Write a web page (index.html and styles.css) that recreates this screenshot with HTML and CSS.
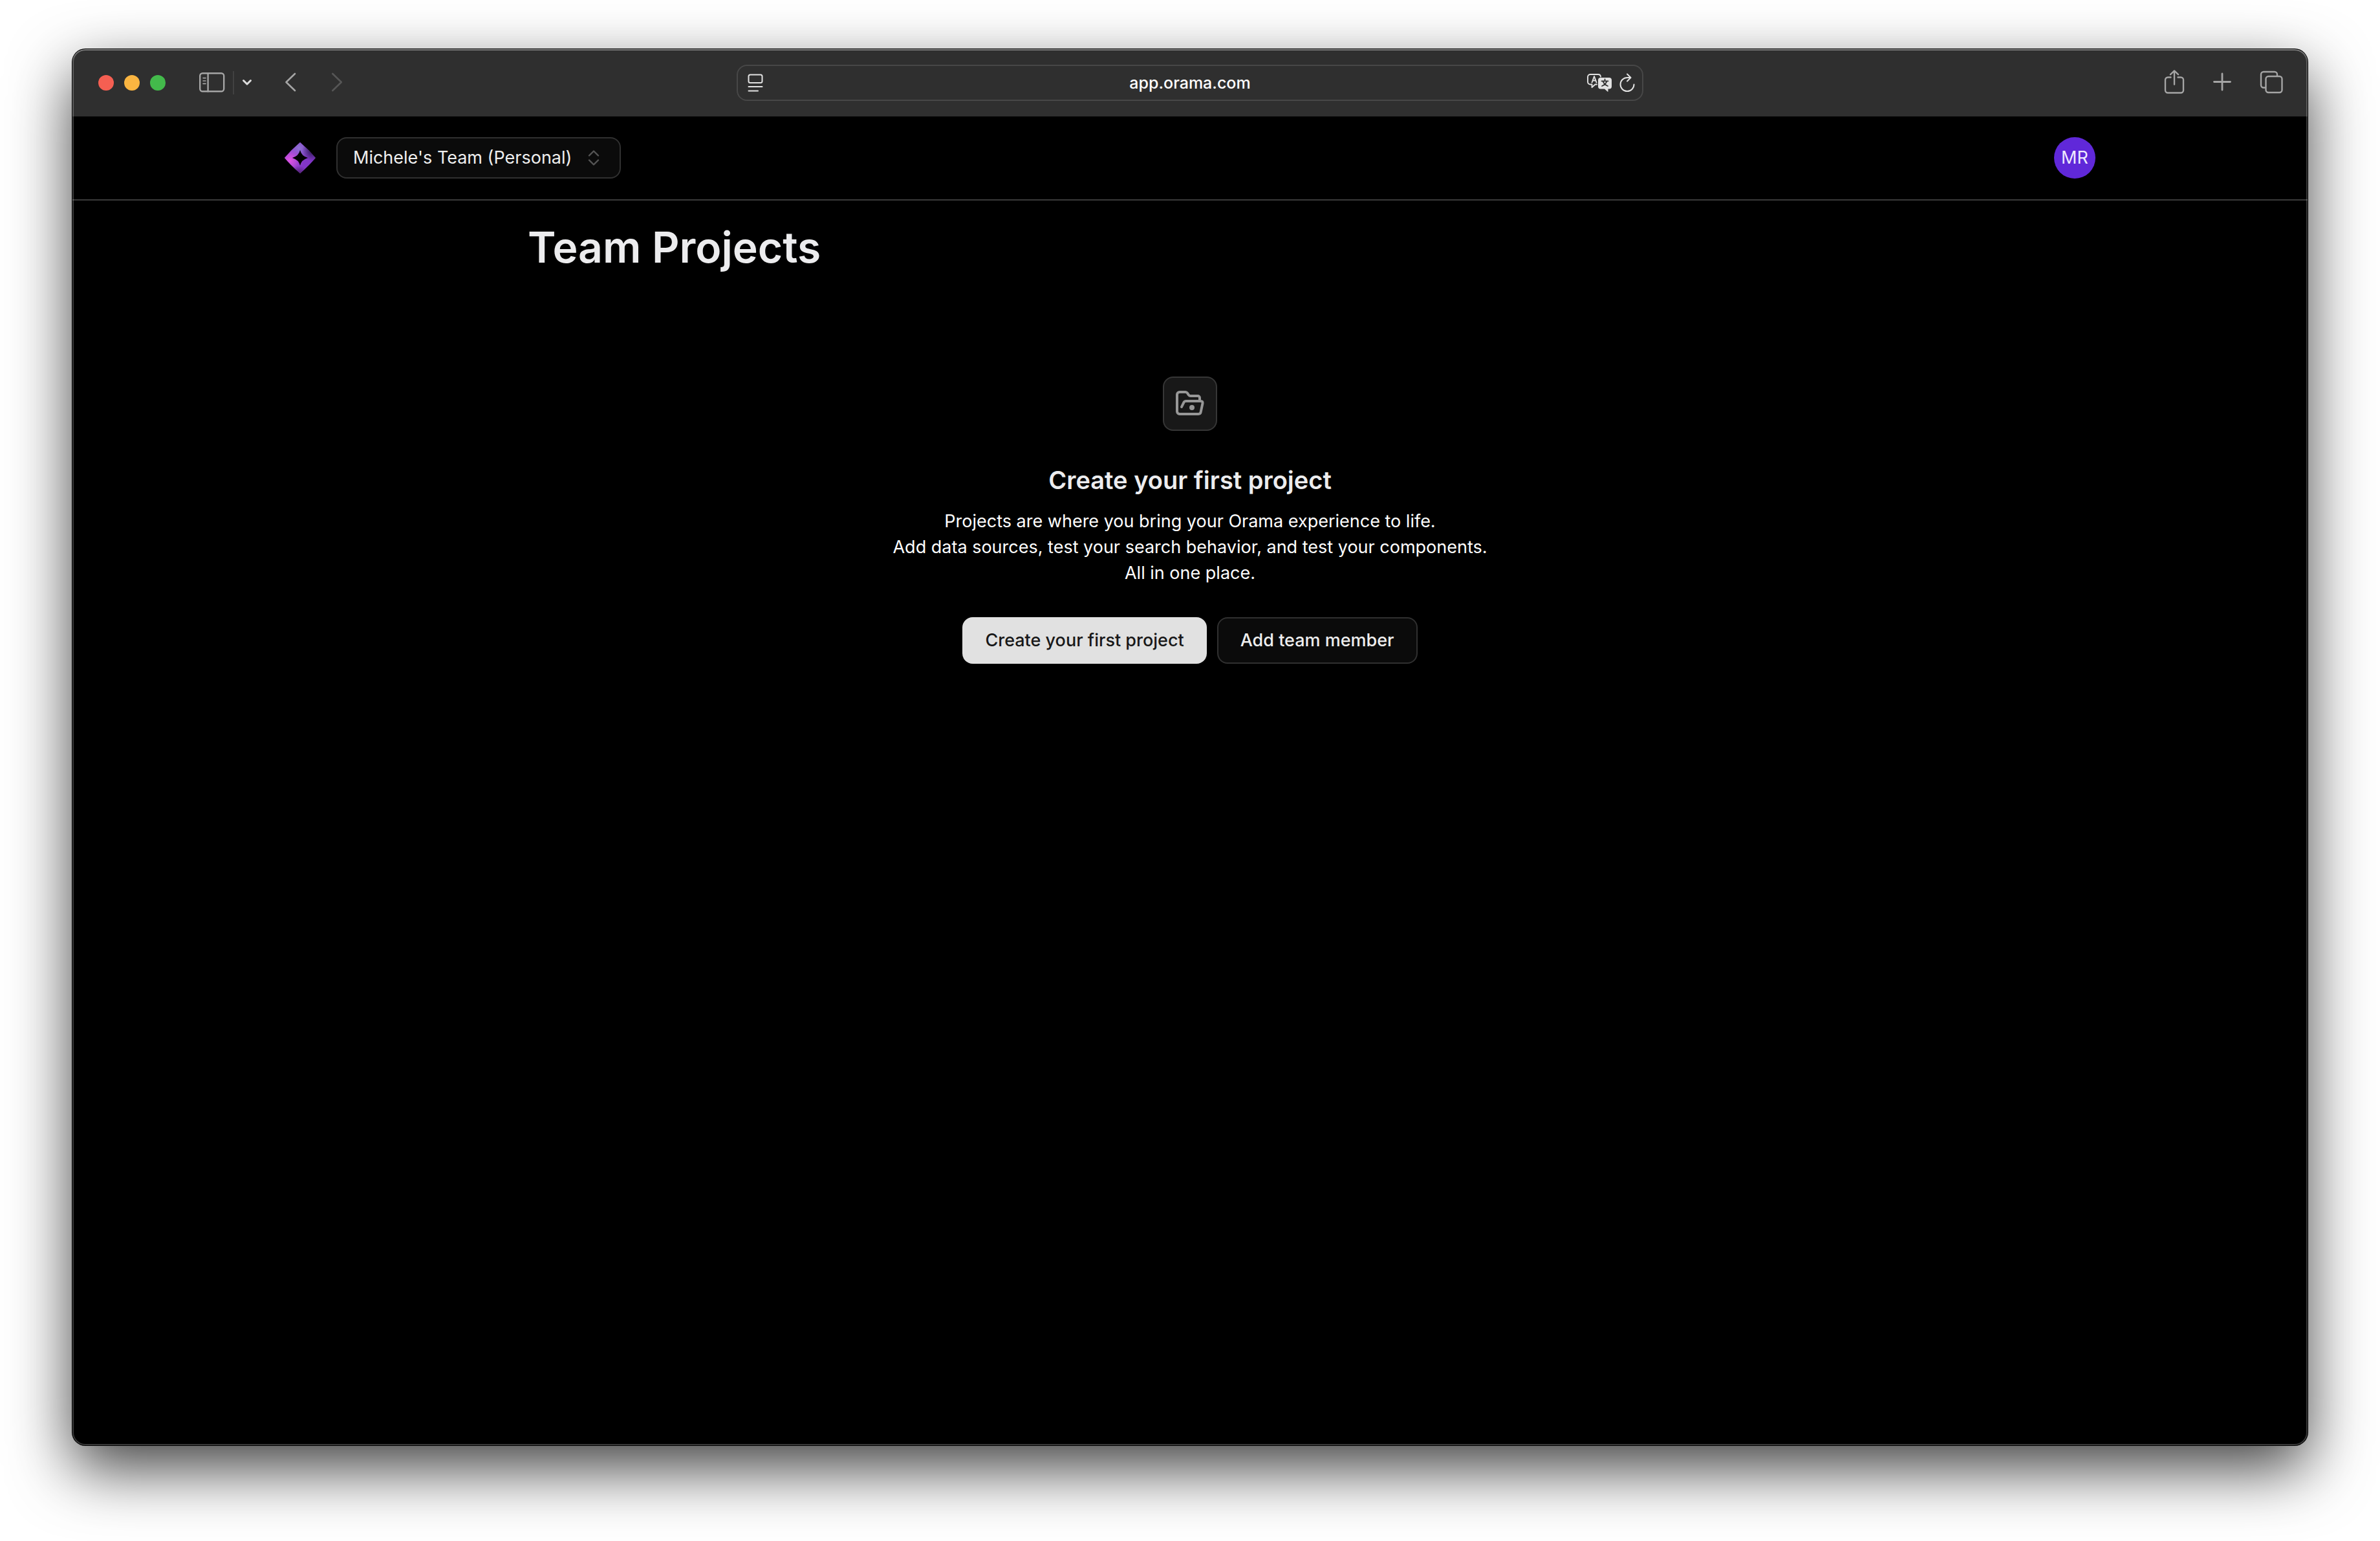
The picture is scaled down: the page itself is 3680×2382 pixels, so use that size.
FILE: index.html
```html
<!DOCTYPE html>
<html lang="en">
<head>
<meta charset="utf-8">
<title>Team Projects</title>
<link rel="stylesheet" href="styles.css">
</head>
<body>
<div class="window">
  <div class="toolbar">
    <div class="toolbar-side">
      <div class="lights">
        <span class="light light-close"></span>
        <span class="light light-minimize"></span>
        <span class="light light-zoom"></span>
      </div>
      <div class="sidebar-tools">
        <button class="tool" type="button" aria-label="Sidebar">
          <svg width="40" height="36" viewBox="0 0 40 36" fill="none" stroke="currentColor" stroke-width="2.4" stroke-linecap="round"><rect x="1.2" y="3.2" width="37" height="28" rx="4"/><path d="M13.6 3.2v28"/><path stroke-width="1.6" d="M6 10.6h4M6 15h4M6 19.4h4"/></svg>
        </button>
        <span class="tool-divider"></span>
        <button class="tool tool-bright" type="button" aria-label="Tab groups">
          <svg width="16" height="36" viewBox="0 0 16 36" fill="none" stroke="currentColor" stroke-width="3" stroke-linecap="round" stroke-linejoin="round"><path d="M2.5 14.5l5.5 5.5 5.5-5.5"/></svg>
        </button>
      </div>
      <div class="history">
        <button class="tool" type="button" aria-label="Back">
          <svg width="20" height="36" viewBox="0 0 20 36" fill="none" stroke="currentColor" stroke-width="2.6" stroke-linecap="round" stroke-linejoin="round"><path d="M16 4L2.5 17 16 30"/></svg>
        </button>
        <button class="tool tool-dim" type="button" aria-label="Forward">
          <svg width="20" height="36" viewBox="0 0 20 36" fill="none" stroke="currentColor" stroke-width="2.6" stroke-linecap="round" stroke-linejoin="round"><path d="M2.3 4L15.8 17 2.3 30"/></svg>
        </button>
      </div>
    </div>
    <div class="address">
      <button class="address-tool" type="button" aria-label="Reader">
        <svg width="24" height="28" viewBox="0 0 24 28" fill="none" stroke="currentColor" stroke-width="2" stroke-linecap="round"><rect x="1.5" y="1.5" width="21" height="12.6" rx="2.5"/><path d="M1.5 20h21M1.5 26.4h14.5"/></svg>
      </button>
      <input class="address-text" type="text" value="app.orama.com" aria-label="Address">
      <div class="address-end">
        <button class="address-tool" type="button" aria-label="Translate">
          <svg width="40" height="30" viewBox="0 0 40 30" fill="none" stroke="currentColor" stroke-linecap="round" stroke-linejoin="round"><path stroke-width="1.9" d="M16 17.5h-2.5l-5 4.500v-4.500H6a4 4 0 0 1-4-4V6a4 4 0 0 1 4-4h12a4 4 0 0 1 4 3.5"/><path stroke-width="1.9" d="M8.5 14.5L12 5l3.5 9.5M9.7 11.5h4.6"/><path fill="currentColor" stroke="none" d="M22 7h13a4 4 0 0 1 4 4v9.5a4 4 0 0 1-4 4h-1.500v3.700q0 1-1 .3l-4.500-4h-6a4 4 0 0 1-4-4V11a4 4 0 0 1 4-4z"/><path stroke="#2f2f2f" stroke-width="1.8" d="M28.5 9.5v2M23.5 12.3h10M25.5 12.5q1.5 5 7.5 7.5M31.5 12.5q-1.5 5-7.5 7.5"/></svg>
        </button>
        <button class="address-tool" type="button" aria-label="Reload">
          <svg width="24" height="30" viewBox="0 0 24 30" fill="none" stroke="currentColor" stroke-width="2" stroke-linecap="round" stroke-linejoin="round"><path d="M22.5 17.5A10.5 10.5 0 1 1 12 7h4.5"/><path d="M12 1.5l5.5 5.5-5.5 5.5"/></svg>
        </button>
      </div>
    </div>
    <div class="toolbar-side toolbar-end">
      <button class="tool" type="button" aria-label="Share">
        <svg width="32" height="40" viewBox="0 2 32 40" fill="none" stroke="currentColor" stroke-width="2.4" stroke-linecap="round" stroke-linejoin="round"><path d="M10.5 13.5H6a4 4 0 0 0-4 4v16a4 4 0 0 0 4 4h20a4 4 0 0 0 4-4v-16a4 4 0 0 0-4-4h-4.5"/><path d="M16 24.500V3.400M10 9.200l6-5.800 6 5.800"/></svg>
      </button>
      <button class="tool" type="button" aria-label="New tab">
        <svg width="28" height="40" viewBox="0 1 28 40" fill="none" stroke="currentColor" stroke-width="2.8" stroke-linecap="round"><path d="M14 7v25M1.5 19.5h25"/></svg>
      </button>
      <button class="tool" type="button" aria-label="Tab overview">
        <svg width="36" height="40" viewBox="0 1 36 40" fill="none" stroke="currentColor" stroke-width="2.4"><rect x="9.5" y="11" width="25" height="25" rx="4"/><path d="M9.5 28.5H6a4 4 0 0 1-4-4V8a4 4 0 0 1 4-4h17a4 4 0 0 1 4 4v3"/></svg>
      </button>
    </div>
  </div>

  <header class="app-header">
    <div class="app-header-inner">
      <div class="brand">
        <a class="logo" href="#" aria-label="Orama">
          <svg width="48" height="48" viewBox="0 0 48 48">
            <defs>
              <radialGradient id="pink" gradientUnits="userSpaceOnUse" cx="8" cy="28" r="22"><stop offset="0" stop-color="#e055e4"/><stop offset=".4" stop-color="#c84fdc" stop-opacity=".8"/><stop offset="1" stop-color="#9a45cf" stop-opacity="0"/></radialGradient>
              <radialGradient id="blue" gradientUnits="userSpaceOnUse" cx="22" cy="9" r="20"><stop offset="0" stop-color="#8f72d2"/><stop offset="1" stop-color="#8f72d2" stop-opacity="0"/></radialGradient>
              <radialGradient id="shade" gradientUnits="userSpaceOnUse" cx="43" cy="13" r="16"><stop offset="0" stop-color="#2b1a52"/><stop offset="1" stop-color="#2b1a52" stop-opacity="0"/></radialGradient>
              <radialGradient id="foot" gradientUnits="userSpaceOnUse" cx="22" cy="50" r="14"><stop offset="0" stop-color="#4a2060"/><stop offset="1" stop-color="#4a2060" stop-opacity="0"/></radialGradient>
            </defs>
            <path fill="#8236c8" d="M24 0Q37 11 48 24 37 37 24 48 11 37 0 24 11 11 24 0z"/>
            <path fill="url(#blue)" d="M24 0Q37 11 48 24 37 37 24 48 11 37 0 24 11 11 24 0z"/>
            <path fill="url(#pink)" d="M24 0Q37 11 48 24 37 37 24 48 11 37 0 24 11 11 24 0z"/>
            <path fill="url(#shade)" d="M24 0Q37 11 48 24 37 37 24 48 11 37 0 24 11 11 24 0z"/>
            <path fill="url(#foot)" d="M24 0Q37 11 48 24 37 37 24 48 11 37 0 24 11 11 24 0z"/>
            <path d="M24 12q2 9 12 12-10 3-12 12-2-9-12-12 10-3 12-12z"/>
          </svg>
        </a>
        <button class="team-switch" type="button">
          <span>Michele's Team (Personal)</span>
          <svg width="20" height="28" viewBox="0 0 20 28" fill="none" stroke="currentColor" stroke-width="2.4" stroke-linecap="round" stroke-linejoin="round"><path d="M3 10.5l7-7 7 7M3 17.5l7 7 7-7"/></svg>
        </button>
      </div>
      <button class="avatar" type="button">MR</button>
    </div>
  </header>

  <main class="content">
    <h1 class="page-title">Team Projects</h1>
    <section class="empty">
      <div class="empty-icon">
        <svg width="48" height="48" viewBox="1 -1 48 48" fill="none" stroke="currentColor" stroke-width="4" stroke-linecap="round" stroke-linejoin="round"><path d="M40 18v-4a3 3 0 0 0-3-3H26q-2 0-3.200-1.700l-1.800-2.600Q19.800 5 18 5H9a4 4 0 0 0-4 4v26a4 4 0 0 0 4 4h29q3 0 3.600-2.800l2.900-13.700Q45 19 41.500 19h-23q-2 0-3 1.800L12 28"/><circle cx="28" cy="29" r="4" fill="currentColor" stroke="none"/></svg>
      </div>
      <h2 class="empty-title">Create your first project</h2>
      <p class="empty-text">Projects are where you bring your Orama experience to life.<br>Add data sources, test your search behavior, and test your components.<br>All in one place.</p>
      <div class="actions">
        <button class="button button-primary" type="button">Create your first project</button>
        <button class="button button-outline" type="button">Add team member</button>
      </div>
    </section>
  </main>
</div>
</body>
</html>
```
FILE: styles.css
```css
* {
  box-sizing: border-box;
}

body {
  display: flex;
  min-height: 100vh;
  margin: 0;
  padding: 76px 112px 148px;
  background: #fff;
  color: #eee;
  font-family: Inter, "Liberation Sans", sans-serif;
  font-size: 27px;
  line-height: 40px;
}

button,
input {
  margin: 0;
  padding: 0;
  border: 0;
  background: none;
  color: inherit;
  font: inherit;
}

svg {
  display: block;
}

.window {
  position: relative;
  display: flex;
  flex: 1;
  flex-direction: column;
  overflow: hidden;
  min-width: 0;
  border-radius: 20px;
  background: #000;
  box-shadow: 0 0 0 1px #000, 0 36px 96px rgba(0, 0, 0, .75);
}

/* Light rim drawn over the window's edge */
.window::after {
  position: absolute;
  inset: 0;
  border-radius: 20px;
  box-shadow: inset 0 2px 0 rgba(255, 255, 255, .2), inset 0 0 0 2px rgba(255, 255, 255, .22);
  content: "";
  pointer-events: none;
}

.toolbar {
  display: grid;
  grid-template-columns: 1fr minmax(0, 1402px) 1fr;
  align-items: center;
  height: 104px;
  padding: 0 40px;
  background: #2f2f2f;
}

.toolbar-side,
.lights,
.sidebar-tools,
.history {
  display: flex;
  align-items: center;
}

.lights {
  gap: 16px;
}

.light {
  width: 24px;
  height: 24px;
  border-radius: 50%;
}

.light-close {
  background: #f55f52;
}

.light-minimize {
  background: #fab541;
}

.light-zoom {
  background: #43ba4b;
}

.sidebar-tools {
  gap: 12px;
  margin-left: 52px;
}

.tool-divider {
  width: 2px;
  height: 36px;
  background: #414141;
}

.history {
  gap: 52px;
  margin-left: 50px;
}

.tool {
  color: #a5a5a5;
}

.tool-bright {
  color: #dcdcdc;
}

.tool-dim {
  color: #565656;
}

.toolbar-end {
  justify-content: flex-end;
  gap: 44px;
  margin-right: -2px;
}

.address {
  display: grid;
  grid-template-columns: 76px 1fr 80px;
  align-items: center;
  height: 56px;
  padding: 0 11px 0 15px;
  border: 2px solid #474747;
  border-radius: 16px;
}

.address-tool {
  color: #e2e2e2;
}

.address-text {
  min-width: 0;
  outline: 0;
  color: #fff;
  font-size: 25px;
  font-weight: 500;
  text-align: center;
}

.address-end {
  display: flex;
  justify-content: flex-end;
  gap: 11px;
}

.app-header {
  padding: 32px 40px;
  border-bottom: 2px solid #3a3a3a;
}

.app-header-inner {
  display: flex;
  align-items: center;
  justify-content: space-between;
  max-width: 2800px;
  margin: 0 auto;
}

.brand {
  display: flex;
  align-items: center;
  gap: 32px;
}

.team-switch {
  display: flex;
  align-items: center;
  justify-content: space-between;
  width: 440px;
  height: 64px;
  padding: 0 30px 0 24px;
  border: 2px solid #303030;
  border-radius: 16px;
  background: #0b0b0b;
}

.team-switch svg {
  color: #555;
}

.avatar {
  width: 64px;
  height: 64px;
  border-radius: 50%;
  background: #6028d9;
  color: #ede9fe;
}

.content {
  width: 100%;
  max-width: 2048px;
  margin: 0 auto;
  padding-top: 32px;
}

.page-title {
  margin: 0;
  color: #ececee;
  font-size: 66px;
  font-weight: 600;
  line-height: 80px;
}

.empty {
  display: flex;
  flex-direction: column;
  align-items: center;
  padding-top: 160px;
  text-align: center;
}

.empty-icon {
  display: grid;
  place-items: center;
  width: 84px;
  height: 84px;
  border: 2px solid #363636;
  border-radius: 16px;
  background: #181818;
  color: #979797;
}

.empty-title {
  margin: 48px 0 16px;
  color: #ececee;
  font-size: 38px;
  font-weight: 600;
  line-height: 56px;
}

.empty-text {
  margin: 0;
  color: #fff;
}

.actions {
  display: flex;
  gap: 16px;
  margin-top: 48px;
}

.button {
  height: 72px;
  padding: 0 35px;
  border: 0 solid #303030;
  border-radius: 16px;
  font-weight: 500;
}

.button-primary {
  background: #e1e1e1;
  color: #181818;
}

.button-outline {
  padding: 0 34px;
  border-width: 2px;
  background: #0b0b0b;
}
```
